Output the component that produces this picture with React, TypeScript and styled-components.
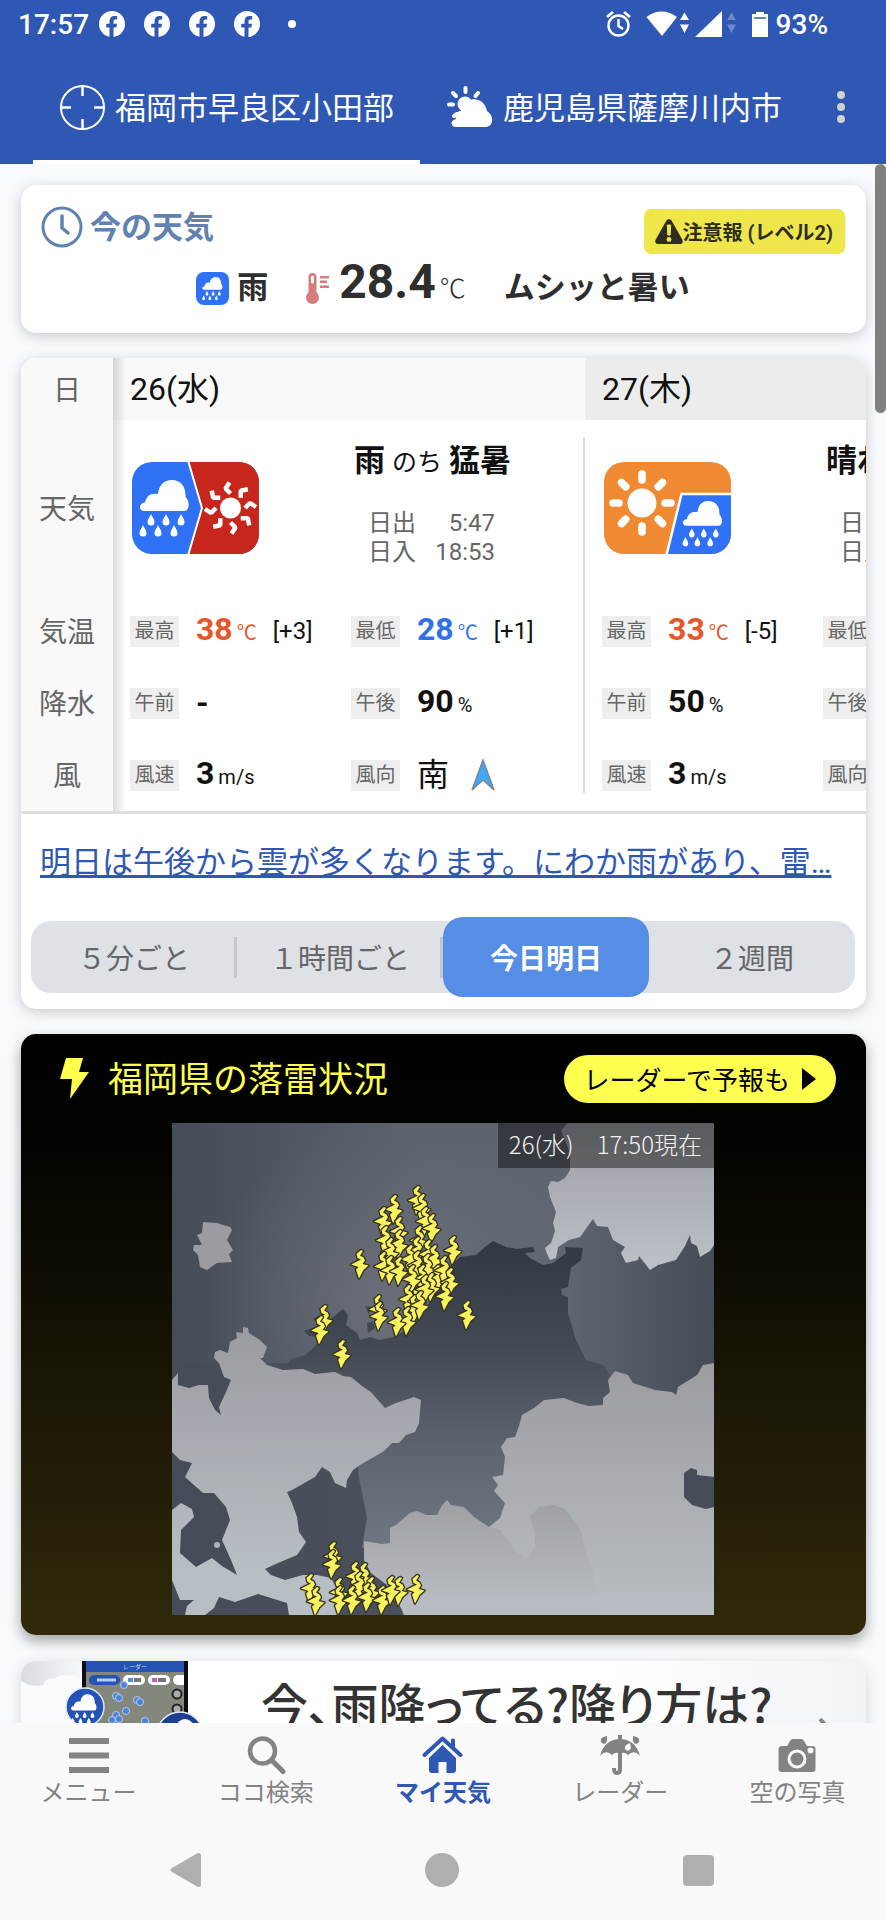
import React from "react";
import styled, { createGlobalStyle, css } from "styled-components";

const blue = "#2f57b4";
const yellow = "#ffff4f";

const GlobalStyle = createGlobalStyle`
  * { box-sizing: border-box; }
  html, body { margin: 0; padding: 0; }
  body {
    font-family: Roboto, "Noto Sans CJK JP", sans-serif;
    color: #111;
    background: #f8fafd;
  }
  button { font: inherit; color: inherit; background: none; border: 0; padding: 0; margin: 0; cursor: pointer; }
  a { color: inherit; text-decoration: none; }
  h2 { margin: 0; font: inherit; }
  svg { display: block; flex: none; }
`;

const Screen = styled.div`
  height: 100vh;
  display: flex;
  flex-direction: column;
  overflow: hidden;
`;

/* ---------- header ---------- */

const Header = styled.header`
  flex: none;
  background: ${blue};
  color: #fff;
`;

const StatusBar = styled.div`
  display: flex;
  align-items: center;
  justify-content: space-between;
  height: 50px;
  padding: 0 58px 2px 18px;
  font-size: 28px;
  font-weight: 500;
`;

const StatusLeft = styled.div`
  display: flex;
  align-items: center;
  gap: 10px;
`;

const Notifications = styled.div`
  display: flex;
  align-items: center;
  gap: 19px;
`;

const Dot = styled.span`
  width: 8px;
  height: 8px;
  margin-left: 9px;
  border-radius: 50%;
  background: #fff;
`;

const StatusRight = styled.div`
  display: flex;
  align-items: center;
  gap: 8px;
`;

const Tabs = styled.nav`
  display: grid;
  grid-template-columns: 1fr 1fr 79px;
  height: 114px;
  padding-left: 33px;
`;

const Tab = styled.button<{ $active?: boolean }>`
  display: flex;
  align-items: center;
  justify-content: flex-start;
  gap: 10px;
  padding: 4px 0 0 27px;
  border-bottom: 4px solid ${(p) => (p.$active ? "#fff" : "transparent")};
  font-size: 31px;
  white-space: nowrap;
  span { padding-bottom: 4px; }
`;

const MoreButton = styled.button`
  display: flex;
  flex-direction: column;
  align-items: center;
  justify-content: center;
  gap: 4px;
  padding-right: 11px;
  span {
    width: 8px;
    height: 8px;
    border-radius: 50%;
    background: #d0d0d0;
  }
`;

/* ---------- content ---------- */

const Main = styled.main`
  position: relative;
  flex: 1;
  min-height: 0;
  overflow: hidden;
  display: flex;
  flex-direction: column;
  gap: 25px;
  padding: 21px 20px 0 21px;
`;

const ScrollThumb = styled.div`
  position: absolute;
  top: 0;
  right: 0;
  width: 11px;
  height: 249px;
  border-radius: 6px;
  background: #808080;
`;

const Card = styled.section`
  flex: none;
  border-radius: 15px;
  background: #fff;
  box-shadow: 0 3px 14px rgba(0, 0, 0, 0.2);
  overflow: hidden;
`;

const NowCard = styled(Card)`
  height: 148px;
  padding: 21px 21px 0 20px;
`;

const NowHead = styled.div`
  display: flex;
  justify-content: space-between;
  align-items: flex-start;
  height: 48px;
`;

const NowTitle = styled.h2`
  display: flex;
  align-items: center;
  gap: 7px;
  color: #6182b0;
  font-size: 31px;
  line-height: 41px;
  font-weight: 700;
`;

const Alert = styled.button`
  display: flex;
  align-items: center;
  height: 45px;
  margin-top: 3px;
  padding: 0 12px 0 11px;
  border-radius: 7px;
  background: #eee64a;
  color: #2d2d22;
  font-size: 20px;
  font-weight: 700;
  white-space: nowrap;
`;

const NowRow = styled.div`
  display: flex;
  align-items: center;
  justify-content: center;
  gap: 38px;
  height: 56px;
  color: #2e2e2e;
  font-size: 31px;
  font-weight: 700;
`;

const NowItem = styled.div`
  display: flex;
  align-items: center;
  gap: 8px;
  svg { margin-top: 12px; }
`;

const NowText = styled.span`
  padding-top: 12px;
  line-height: 46px;
`;

const NowTemp = styled.span`
  margin-left: 2px;
  font-size: 48px;
  line-height: 56px;
  small {
    margin-left: 4px;
    font-size: 26px;
    line-height: 26px;
    font-weight: 300;
  }
`;

/* ---------- forecast ---------- */

const TableScroll = styled.div`
  overflow: hidden;
  border-bottom: 3px solid #dedede;
`;

const ForecastTable = styled.table`
  width: 1036px;
  table-layout: fixed;
  border-collapse: separate;
  border-spacing: 0;
  th, td { padding: 0; }
`;

const LabelCol = styled.col` width: 92px; `;
const FirstHalfCol = styled.col` width: 238px; `;
const SecondHalfCol = styled.col` width: 234px; `;

const Row = styled.tr<{ $height: number }>`
  height: ${(p) => p.$height}px;
`;

const RowLabel = styled.th`
  position: sticky;
  left: 0;
  background: #f9f9f9;
  color: #666;
  font-size: 28px;
  line-height: 36px;
  font-weight: 400;
  && { padding-top: 4px; }
  &::after {
    content: "";
    position: absolute;
    top: 0;
    bottom: 0;
    left: 100%;
    width: 13px;
    background: linear-gradient(90deg, rgba(0, 0, 0, 0.14), rgba(0, 0, 0, 0));
  }
`;

const DayHead = styled.th<{ $shade: boolean }>`
  background: ${(p) => (p.$shade ? "#ececec" : "#f9f9f9")};
  text-align: left;
  font-size: 32px;
  line-height: 40px;
  font-weight: 400;
  && { padding-left: 17px; }
`;

const Cell = styled.td<{ $divider?: "top" | "full" | "bottom" }>`
  ${(p) =>
    p.$divider &&
    css`
      background: linear-gradient(#dedede, #dedede) no-repeat right
        ${p.$divider === "top" ? "bottom" : "top"} / 2px
        ${p.$divider === "full" ? "100%" : p.$divider === "top" ? "calc(100% - 17px)" : "calc(100% - 18px)"};
    `}
`;

const IconBox = styled.div`
  padding-left: 19px;
`;

const Summary = styled.div`
  display: flex;
  flex-direction: column;
  gap: 24px;
  padding: 0 0 10px 3px;
`;

const SummaryText = styled.div`
  font-size: 31px;
  line-height: 44px;
  font-weight: 700;
  white-space: nowrap;
  small {
    margin: 0 7px;
    font-size: 25px;
    font-weight: 400;
  }
`;

const SunTimes = styled.div`
  display: grid;
  grid-template-columns: 48px 79px;
  margin-left: 14px;
  color: #666;
  font-size: 24px;
  line-height: 29px;
  span:nth-child(even) { text-align: right; }
`;

const Metric = styled.div<{ $second?: boolean }>`
  display: flex;
  align-items: center;
  padding-left: ${(p) => (p.$second ? 0 : 17)}px;
  white-space: nowrap;
`;

const Tag = styled.span`
  width: 49px;
  margin-right: 17px;
  background: #eee;
  color: #666;
  text-align: center;
  font-size: 20px;
  line-height: 31px;
`;

const Value = styled.span<{ $tone?: string; $plain?: boolean }>`
  color: ${(p) => p.$tone || "#111"};
  font-size: 32px;
  line-height: 40px;
  font-weight: ${(p) => (p.$plain ? 400 : 700)};
  small {
    margin-left: 4px;
    font-size: 20px;
    font-weight: 400;
  }
`;

const Diff = styled.span`
  margin-left: 16px;
  font-size: 24px;
`;

const WindArrow = styled.svg`
  margin-left: 22px;
`;

const Comment = styled.a`
  display: block;
  padding: 26px 19px 35px;
  color: ${blue};
  font-size: 31px;
  line-height: 46px;
  white-space: nowrap;
  text-decoration: underline 3px;
  text-underline-offset: 2px;
  text-decoration-skip-ink: none;
`;

const Segments = styled.div`
  display: grid;
  grid-template-columns: repeat(4, 1fr);
  height: 72px;
  margin: 0 11px 16px 10px;
  border-radius: 20px;
  background: #dee1e6;
`;

const Segment = styled.button<{ $active?: boolean; $line?: boolean }>`
  font-size: 28px;
  color: #666;
  background: ${(p) =>
    p.$line ? "linear-gradient(#c3c6ca, #c3c6ca) no-repeat right center / 3px 41px" : "none"};
  ${(p) =>
    p.$active &&
    css`
      margin: -4px 0;
      border-radius: 20px;
      background: #568de5;
      color: #fff;
      font-weight: 700;
    `}
`;

/* ---------- lightning ---------- */

const LightningCard = styled(Card)`
  background: linear-gradient(#000, #030300 18%, #302a0a);
  box-shadow: 0 6px 14px rgba(0, 0, 0, 0.35);
`;

const LightningHead = styled.div`
  display: flex;
  align-items: center;
  height: 89px;
  padding: 0 30px 0 39px;
`;

const LightningTitle = styled.h2`
  flex: 1;
  margin-left: 19px;
  padding-top: 4px;
  color: ${yellow};
  font-size: 35px;
  line-height: 50px;
`;

const RadarLink = styled.a`
  display: flex;
  align-items: center;
  gap: 12px;
  height: 48px;
  padding: 0 20px;
  border-radius: 24px;
  background: ${yellow};
  color: #000;
  font-size: 26px;
`;

const MapFigure = styled.figure`
  position: relative;
  margin: 0 152px 20px 151px;
  svg { width: 100%; height: auto; }
`;

const MapTime = styled.figcaption`
  position: absolute;
  top: 0;
  right: 0;
  display: flex;
  gap: 23px;
  padding: 0 12px 4px 11px;
  background: rgba(0, 0, 0, 0.42);
  color: #f2f2f2;
  font-family: "Noto Sans CJK JP", sans-serif;
  font-size: 24px;
  line-height: 41px;
  font-weight: 300;
`;

/* ---------- banner ---------- */

const Banner = styled.a`
  flex: none;
  display: flex;
  align-items: flex-start;
  margin-top: 1px;
  height: 170px;
  border-radius: 15px;
  overflow: hidden;
  background: linear-gradient(90deg, #fff 70%, #f1f3f7);
  box-shadow: 0 3px 14px rgba(0, 0, 0, 0.14);
  color: #333;
`;

const BannerText = styled.span`
  flex: 1;
  margin: 10px 0 0 37px;
  font-family: "Noto Sans CJK JP", sans-serif;
  font-size: 47px;
  line-height: 64px;
  font-weight: 500;
  font-feature-settings: "palt";
  white-space: nowrap;
`;

const BannerChevron = styled.svg`
  margin: 56px 34px 0 0;
`;

/* ---------- bottom ---------- */

const BottomNav = styled.nav`
  position: relative;
  flex: none;
  display: grid;
  grid-template-columns: repeat(5, 1fr);
  height: 97px;
  padding-top: 11px;
  background: #f9f9f9;
`;

const NavItem = styled.a<{ $active?: boolean }>`
  display: flex;
  flex-direction: column;
  align-items: center;
  gap: 1px;
  color: ${(p) => (p.$active ? blue : "#838383")};
  font-size: 24px;
  line-height: 32px;
  font-weight: ${(p) => (p.$active ? 700 : 400)};
  white-space: nowrap;
`;

const SystemNav = styled.div`
  flex: none;
  display: grid;
  grid-template-columns: repeat(3, 1fr);
  height: 100px;
  padding: 0 60px 0 58px;
  background: #f9f9f9;
`;

const SystemButton = styled.button`
  display: flex;
  align-items: center;
  justify-content: center;
`;

/* ---------- drawings ---------- */

const FacebookIcon = () => (
  <svg width="26" height="26" viewBox="0 0 26 26" aria-hidden="true">
    <circle cx="13" cy="13" r="13" fill="#fff" />
    <path d="M10.500 26V16.500H7.200V12.700H10.500V10.200C10.500 6.800 12.500 5 15.500 5C16.800 5 18.200 5.200 18.200 5.200V8.500H16.600C15 8.500 14.500 9.400 14.500 10.400V12.700H18L17.400 16.500H14.500V26Z" fill={blue} />
  </svg>
);

const StatusIcons = () => (
  <svg width="162" height="28" viewBox="0 0 162 28" aria-hidden="true">
    <g fill="none" stroke="#fff" strokeWidth="2.400">
      <circle cx="12.500" cy="15.500" r="10" />
      <path d="M12.500 9V16L17 19" />
      <path d="M1 7L7 2M24 7L18 2" strokeWidth="2.800" />
    </g>
    <path d="M40.500 7C49 -0.500 62 -0.500 71 7L56 26Z" fill="#fff" />
    <path d="M78.500 2.500L83 10H74ZM78.500 23L83 14.500H74Z" fill="#fff" />
    <path d="M116 1V27H89Z" fill="#fff" />
    <path d="M125.500 2.500L130 10H121ZM125.500 23L130 14.500H121Z" fill="#fff" opacity="0.300" />
    <path d="M146 4H150V2H158V4H162V27H146Z" fill="#fff" />
    <path d="M148 8H160" stroke={blue} strokeWidth="1.500" />
  </svg>
);

const TargetIcon = () => (
  <svg width="45" height="45" viewBox="0 0 45 45" fill="none" stroke="#fff" strokeWidth="2" aria-hidden="true">
    <circle cx="22.500" cy="22.500" r="21.500" />
    <path d="M22.500 1V11M22.500 34V44M1 22.500H11M34 22.500H44" strokeWidth="2.500" />
  </svg>
);

const SunCloudIcon = () => (
  <svg width="46" height="42" viewBox="0 0 46 42" fill="#fff" aria-hidden="true">
    <g stroke="#fff" strokeWidth="4" strokeLinecap="round">
      <path d="M18.500 2V6M6 7L9 10M31 7L28.500 10M2 18.500H6M7 30L9.500 28" />
    </g>
    <circle cx="18" cy="18" r="7.500" />
    <path d="M9 41C3 41 3 34 9 33C7 29 10 25 14 25C12 18 18 14 22 15C26 11 38 13 40 25C48 30 46 41 39 41Z" />
  </svg>
);

const ClockIcon = () => (
  <svg width="42" height="42" viewBox="0 0 42 42" fill="none" stroke="#6182b0" strokeLinecap="round" strokeLinejoin="round" aria-hidden="true">
    <circle cx="21" cy="21" r="19" strokeWidth="3" />
    <path d="M21 10V22L27 27" strokeWidth="3.500" />
  </svg>
);

const WarningIcon = () => (
  <svg width="28" height="25" viewBox="0 0 28 25" aria-hidden="true">
    <path d="M11.500 1.500Q14 -1.500 16.500 1.500L27.500 21Q28.500 25 24.500 25H3.500Q-0.500 25 0.500 21Z" fill="#2d2d22" />
    <path d="M12.300 6H15.700L15.200 16H12.800Z" fill="#eee64a" stroke="#eee64a" strokeLinejoin="round" />
    <circle cx="14" cy="20.500" r="2.400" fill="#eee64a" />
  </svg>
);

const dropPath = "M0 -6C1 -3 3.500 -1 3.500 2A3.500 3.500 0 0 1 -3.500 2C-3.500 -1 -1 -3 0 -6Z";

const RainCloud = () => (
  <g fill="#fff">
    <path d="M12 49C6.500 49 6.500 41 13 40.500C14 34 19 30.500 26 32C27 23 32 18 40 18C49 18 54 25 53.500 35C58 39 58 49 52 49Z" />
    {[[19, 58], [34, 58], [49, 58], [11, 69], [26, 69], [42, 69]].map(([x, y]) => (
      <path key={`${x}-${y}`} d={dropPath} transform={`translate(${x} ${y})`} />
    ))}
  </g>
);

const RainBadge = () => (
  <svg width="33" height="33" viewBox="0 0 33 33" aria-hidden="true">
    <rect width="33" height="33" rx="8" fill="#3072f6" />
    <g transform="translate(3.200 -2.400) scale(.41)"><RainCloud /></g>
  </svg>
);

const ThermometerIcon = () => (
  <svg width="23" height="31" viewBox="0 0 23 31" fill="#d77c7c" aria-hidden="true">
    <circle cx="6.500" cy="24.500" r="6.500" />
    <rect x="2.500" y="0" width="8" height="24" rx="4" />
    <rect x="5" y="2.500" width="3" height="8" rx="1.500" fill="#fff" />
    <path d="M14 3H23V5.500H14ZM14 7.500H21V10H14ZM14 12.500H23V15H14Z" />
  </svg>
);

const RainThenHot = () => (
  <svg width="127" height="92" viewBox="0 0 127 92" role="img" aria-label="雨のち猛暑">
    <clipPath id="tileA"><rect width="127" height="92" rx="20" /></clipPath>
    <g clipPath="url(#tileA)">
      <rect width="127" height="92" fill="#3072f6" />
      <path d="M56.500 -2V0L70 46L56.500 92V94H130V-2Z" fill="#c6261c" stroke="#fff" strokeWidth="2" />
      <RainCloud />
      <circle cx="98.500" cy="46" r="10.500" fill="#fff" />
      <g fill="none" stroke="#fff" strokeWidth="4.500" strokeLinejoin="bevel">
        {[0, 45, 90, 135, 180, 225, 270, 315].map((a) => (
          <path key={a} d="M97.500 20.500L93.500 26.500L98.500 31.500" transform={`rotate(${a} 98.500 46)`} />
        ))}
      </g>
    </g>
  </svg>
);

const SunPartRain = () => (
  <svg width="127" height="92" viewBox="0 0 127 92" role="img" aria-label="晴れ一時雨">
    <clipPath id="tileB"><rect width="127" height="92" rx="20" /></clipPath>
    <g clipPath="url(#tileB)">
      <rect width="127" height="92" fill="#ef8a33" />
      <circle cx="38" cy="41" r="14.500" fill="#fff" />
      <g stroke="#fff" strokeWidth="7.500" strokeLinecap="round">
        {[0, 45, 90, 135, 180, 225, 270, 315].map((a) => (
          <path key={a} d="M38 12V18" transform={`rotate(${a} 38 41)`} />
        ))}
      </g>
      <path d="M77.500 32H130V95H62Z" fill="#3072f6" stroke="#fff" strokeWidth="2.500" />
      <g transform="translate(72.600 24.600) scale(.8)"><RainCloud /></g>
    </g>
  </svg>
);

const BoltIcon = () => (
  <svg width="29" height="41" viewBox="0 0 29 41" fill={yellow} aria-hidden="true">
    <path d="M6 0H23L19 14H29L10 41L12 21H0Z" />
  </svg>
);

const strikes = [
  [245, 63], [250, 71], [222, 72], [211, 84], [253, 84], [260, 91], [227, 94], [247, 103], [213, 103],
  [227, 107], [245, 114], [256, 117], [218, 115], [238, 122], [262, 122], [211, 129], [218, 133], [227, 134],
  [245, 128], [255, 131], [281, 113], [250, 142], [240, 142], [265, 142], [272, 133], [259, 150], [278, 145],
  [236, 162], [245, 164], [253, 152], [242, 172], [248, 168], [273, 159], [235, 184], [225, 185], [206, 172],
  [207, 179], [295, 178], [152, 182], [148, 193], [170, 217], [188, 127],
  [161, 419], [160, 427], [138, 451], [144, 464], [167, 455], [167, 463], [192, 440], [183, 439], [187, 449],
  [199, 454], [180, 463], [195, 460], [210, 463], [227, 454], [219, 453], [244, 452],
];

const LightningMap = () => (
  <svg viewBox="0 0 542 492" role="img" aria-label="福岡県周辺の落雷地図">
    <defs>
      <linearGradient id="sea" x1="0" y1="0" x2="1" y2="0">
        <stop offset="0" stopColor="#454b57" />
        <stop offset=".45" stopColor="#5c636d" />
        <stop offset=".72" stopColor="#5f666f" />
        <stop offset="1" stopColor="#454c58" />
      </linearGradient>
      <radialGradient id="seaGlow" gradientUnits="userSpaceOnUse" cx="225" cy="180" r="190">
        <stop offset="0" stopColor="#6e727c" stopOpacity=".8" />
        <stop offset="1" stopColor="#6e727c" stopOpacity="0" />
      </radialGradient>
      <linearGradient id="home" gradientUnits="userSpaceOnUse" x1="0" y1="120" x2="0" y2="410">
        <stop offset="0" stopColor="#333943" />
        <stop offset=".35" stopColor="#424952" />
        <stop offset=".65" stopColor="#59606a" />
        <stop offset="1" stopColor="#6d7680" />
      </linearGradient>
      <linearGradient id="west" gradientUnits="userSpaceOnUse" x1="0" y1="205" x2="0" y2="450">
        <stop offset="0" stopColor="#9a9ba1" />
        <stop offset="1" stopColor="#b8bfc4" />
      </linearGradient>
      <linearGradient id="east" gradientUnits="userSpaceOnUse" x1="0" y1="250" x2="0" y2="490">
        <stop offset="0" stopColor="#9d9da2" />
        <stop offset="1" stopColor="#b8bec3" />
      </linearGradient>
      <linearGradient id="south" gradientUnits="userSpaceOnUse" x1="0" y1="378" x2="0" y2="480">
        <stop offset="0" stopColor="#a09fa3" />
        <stop offset="1" stopColor="#b7bdc2" />
      </linearGradient>
      <linearGradient id="north" gradientUnits="userSpaceOnUse" x1="0" y1="0" x2="0" y2="145">
        <stop offset="0" stopColor="#9c9ea3" />
        <stop offset="1" stopColor="#bcc1c8" />
      </linearGradient>
      <g id="strike">
        <path d="M1 0L-3.500 4L-2.500 8L1 9.500L-9 14.500L-3 16.500L-1.500 17.500L-4 19.500L-1 28.500L3.500 20L8.500 15.500L2.500 14L5 10.500L3.500 7.500L0 5.500L3 1Z" fill="#fbf35d" stroke="#35331f" strokeWidth="2.600" strokeLinejoin="round" paintOrder="stroke" />
      </g>
    </defs>
    <rect width="542" height="492" fill="url(#sea)" />
    <rect width="542" height="492" fill="url(#seaGlow)" />
    <path d="M0 240H230V492H0Z" fill="#464c57" opacity=".75" />
    <path d="M31 99L45 100L58 104L60 107L55 117L61 127L57 131L60 139L45 140L35 147L28 144L26 132L21 127L22 122L30 122L25 112L30 110Z" fill="#9b9ba1" />
    <path d="M113 244L119 236L133 232L141 225L150 215L137 213L132 208L140 205L150 203L161 194L171 186L176 192L174 202L185 210L188 217L198 214L208 217L221 214L233 208L248 194L261 174L271 150L288 134L304 132L313 124L321 118L334 124L345 126L361 124L363 129L353 130L358 135L371 142L381 140L394 130L393 124L411 125L409 137L399 145L396 164L389 166L390 172L396 174L396 190L404 217L414 237L431 242L438 252L436 300L340 412L190 425L195 395L186 350L188 280Z" fill="url(#home)" />
    <path d="M195 200L201 198L203 205L196 210ZM193 183L199 184L197 192Z" fill="#424952" />
    <path d="M0 257L6 250L6 262L17 265L27 262L36 262L37 275L43 287L49 292L47 284L54 269L59 257L52 254L47 240L42 235L43 229L48 227L56 230L58 219L65 215L64 209L71 210L71 204L76 205L77 210L88 217L95 224L91 235L88 235L95 242L111 247L131 246L143 251L152 250L163 249L171 253L179 254L190 263L199 269L205 276L213 285L224 280L242 274L249 277L247 300L243 309L234 312L227 320L220 320L212 328L202 334L188 342L181 347L175 357L174 365L163 360L158 349L150 344L143 354L120 367L115 369L120 380L125 394L127 409L134 419L125 432L106 440L93 446L99 452L113 457L131 452L145 452L159 455L167 470L167 492H117L115 480L86 471L63 479L47 474L42 485L33 492H13L15 483L22 477L8 477L0 457V387L9 380L20 386L22 394L9 407L8 430L24 444L40 435L50 443L65 452L59 437L50 417L58 397L54 384L42 370L31 370L13 354L20 340L8 337L0 329Z" fill="url(#west)" />
    <circle cx="45" cy="422" r="3" fill="#aeb3ba" />
    <path d="M542 240L531 242L525 252L506 264L504 272L500 269L483 267L461 260L456 252L443 248L436 257L438 269L431 275V282L417 283L405 280L392 275L372 277L362 285L350 292L347 303L343 314L335 315L329 324L333 334L331 352L320 354L326 362L322 368L333 380L328 395L317 404L345 460L400 492H542Z" fill="url(#east)" />
    <path d="M542 354L525 352V347L519 345L512 350V374L520 382L534 386L542 384Z" fill="#464c58" />
    <path d="M192 418L210 421L218 420V405L224 402L238 390L245 388L254 392L265 392L270 382L275 377L279 382L292 384L302 394L317 404L328 407L345 430L354 435L363 424L363 410L358 394L367 384L381 382L392 385L399 394L409 407L413 427L420 444L424 470L422 492H232L229 485L215 462L199 450L192 437Z" fill="url(#south)" />
    <path d="M396 0L389 7L398 30L398 47L393 55L386 59L379 58L376 64L378 74L384 89L381 100L383 108L379 120L373 125L375 131L378 137L384 135L386 124L397 117L408 114L421 96L425 103L436 104L441 117L453 124L449 130L454 140L466 137L467 133L478 147L486 142L504 137L513 123L518 112L519 120L525 123L528 134L538 128L542 122V0Z" fill="url(#north)" />
    {strikes.map(([x, y], i) => (
      <use key={i} href="#strike" x={x} y={y} />
    ))}
  </svg>
);

const BannerArt = () => (
  <svg width="203" height="170" viewBox="0 0 203 170" aria-hidden="true">
    <linearGradient id="bannerSky" x1="0" x2="1"><stop offset="0" stopColor="#d9dbe2" /><stop offset="1" stopColor="#f7f8fa" /></linearGradient>
    <rect width="61" height="60" fill="url(#bannerSky)" />
    <path d="M0 20Q12 27 22 24Q25 16 34 18Q40 12 48 15Q56 12 62 20V170H0Z" fill="#fbfbfd" />
    <rect x="61" y="0" width="106" height="170" fill="#0c0d12" />
    <rect x="65" y="0" width="98" height="11" fill="#2553b5" />
    <rect x="65" y="11" width="98" height="160" fill="#84887c" />
    <text x="114" y="8" fill="#cfdcf5" fontSize="6" textAnchor="middle">レーダー</text>
    <rect x="68" y="14" width="31" height="10" rx="5" fill="#2553b5" />
    <rect x="102" y="14" width="22" height="10" rx="5" fill="#fff" />
    <rect x="127" y="14" width="22" height="10" rx="5" fill="#fff" />
    <path d="M163 14H157A5 5 0 0 0 157 24H163Z" fill="#fff" />
    <path d="M76 19H95" stroke="#b9cdf2" strokeWidth="3" />
    <path d="M107 19H112" stroke="#4f8fe0" strokeWidth="4" /><path d="M113 19H120" stroke="#777" strokeWidth="4" />
    <path d="M131 19H136" stroke="#c55db3" strokeWidth="4" /><path d="M137 19H145" stroke="#777" strokeWidth="4" />
    {[[95, 35], [98, 37], [116, 39], [119, 41], [95, 54], [105, 50], [98, 58], [91, 59], [124, 60], [103, 24]].map(([x, y]) => (
      <circle key={`${x}-${y}`} cx={x} cy={y} r="3.500" fill="#4b83d6" stroke="#b9cdec" strokeWidth="1" />
    ))}
    <circle cx="156" cy="33" r="4.500" fill="#aaa" stroke="#222" strokeWidth="2" />
    <circle cx="156" cy="48" r="4.500" fill="#aaa" stroke="#222" strokeWidth="2" />
    <circle cx="64" cy="46" r="19" fill="#2553b5" stroke="#dfe8f8" strokeWidth="1.500" />
    <g transform="translate(46 24) scale(.52)"><RainCloud /></g>
    <circle cx="159" cy="74" r="23" fill="#1c3f94" stroke="#dfe8f8" strokeWidth="1.500" />
    <circle cx="164" cy="67" r="9" fill="#fff" />
  </svg>
);

const MenuIcon = () => (
  <svg width="40" height="42" viewBox="0 0 40 42" aria-hidden="true">
    <path d="M0 4H40V10H0ZM0 18.500H40V24.500H0ZM0 33H40V39H0Z" fill="#838383" />
  </svg>
);

const SearchIcon = () => (
  <svg width="40" height="42" viewBox="0 0 40 42" fill="none" stroke="#838383" strokeWidth="4.500" aria-hidden="true">
    <circle cx="16.500" cy="17" r="12.500" />
    <path d="M25.500 26L37 37.500" strokeLinecap="round" strokeWidth="5" />
  </svg>
);

const HomeIcon = () => (
  <svg width="42" height="42" viewBox="0 0 42 42" aria-hidden="true">
    <path d="M2.500 21L20.500 4.500L38.500 21" fill="none" stroke={blue} strokeWidth="4" strokeLinecap="round" strokeLinejoin="round" />
    <path d="M29 5.500Q31 3.500 33 5.500V15L29 11ZM7 24L20.500 11L34 24V36Q34 39 31 39H24.500V28H16.500V39H10Q7 39 7 36Z" fill={blue} />
  </svg>
);

const UmbrellaIcon = () => (
  <svg width="42" height="42" viewBox="0 0 42 42" fill="#838383" aria-hidden="true">
    <path d="M1 22C4 10 12 5 21 5C30 5 38 10 41 22Q35 15 29 21Q25 17 21 20Q17 17 13 21Q7 15 1 22Z" />
    <path d="M21 1V5M21 18V36Q21 39 17.500 39Q15 39 15 34" fill="none" stroke="#838383" strokeWidth="4" />
    <path d="M8 2Q9 9 5 10Q1 9 2 5Q3 3 8 2ZM34 2Q33 9 37 10Q41 9 40 5Q39 3 34 2Z" />
    <path d="M31 9Q25 11 26 15Q29 19 32 14Z" fill="#f9f9f9" />
  </svg>
);

const CameraIcon = () => (
  <svg width="38" height="42" viewBox="0 0 38 42" aria-hidden="true">
    <path d="M4 12H9L12 7Q13 5 15 5H23Q25 5 26 7L29 12H34Q37.500 12 37.500 15V35Q37.500 38 34 38H4Q0.500 38 0.500 35V15Q0.500 12 4 12Z" fill="#838383" />
    <circle cx="19" cy="25" r="8" fill="#838383" stroke="#f9f9f9" strokeWidth="3" />
    <circle cx="32.500" cy="16.500" r="3" fill="#f9f9f9" />
  </svg>
);

/* ---------- data ---------- */

type Day = {
  label: string;
  icon: React.ReactNode;
  from: string;
  joint: string;
  to: string;
  rise: string;
  set: string;
  high: string;
  highDiff: string;
  low: string;
  lowDiff: string;
  am: string;
  pm: string;
  wind: string;
  direction: string;
};

const days: Day[] = [
  { label: "26(水)", icon: <RainThenHot />, from: "雨", joint: "のち", to: "猛暑", rise: "5:47", set: "18:53", high: "38", highDiff: "[+3]", low: "28", lowDiff: "[+1]", am: "", pm: "90", wind: "3", direction: "南" },
  { label: "27(木)", icon: <SunPartRain />, from: "晴れ", joint: "一時", to: "雨", rise: "5:47", set: "18:52", high: "33", highDiff: "[-5]", low: "28", lowDiff: "[0]", am: "50", pm: "50", wind: "3", direction: "南" },
];

const navItems = [
  { label: "メニュー", icon: <MenuIcon /> },
  { label: "ココ検索", icon: <SearchIcon /> },
  { label: "マイ天気", icon: <HomeIcon />, active: true },
  { label: "レーダー", icon: <UmbrellaIcon /> },
  { label: "空の写真", icon: <CameraIcon /> },
];

const Rain = ({ amount }: { amount: string }) => (
  <Value>{amount ? <>{amount}<small>%</small></> : "-"}</Value>
);

const Forecast = () => (
  <TableScroll>
    <ForecastTable>
      <colgroup>
        <LabelCol />
        {days.map((d) => (
          <React.Fragment key={d.label}><FirstHalfCol /><SecondHalfCol /></React.Fragment>
        ))}
      </colgroup>
      <tbody>
        <Row $height={62}>
          <RowLabel scope="row">日</RowLabel>
          {days.map((d, i) => (
            <DayHead key={d.label} scope="col" colSpan={2} $shade={i === 1}>{d.label}</DayHead>
          ))}
        </Row>
        <Row $height={175}>
          <RowLabel scope="row">天気</RowLabel>
          {days.map((d) => (
            <React.Fragment key={d.label}>
              <Cell><IconBox>{d.icon}</IconBox></Cell>
              <Cell $divider="top">
                <Summary>
                  <SummaryText>{d.from}<small>{d.joint}</small>{d.to}</SummaryText>
                  <SunTimes>
                    <span>日出</span><span>{d.rise}</span>
                    <span>日入</span><span>{d.set}</span>
                  </SunTimes>
                </Summary>
              </Cell>
            </React.Fragment>
          ))}
        </Row>
        <Row $height={72}>
          <RowLabel scope="row">気温</RowLabel>
          {days.map((d) => (
            <React.Fragment key={d.label}>
              <Cell><Metric><Tag>最高</Tag><Value $tone="#e4572a">{d.high}<small>℃</small></Value><Diff>{d.highDiff}</Diff></Metric></Cell>
              <Cell $divider="full"><Metric $second><Tag>最低</Tag><Value $tone="#3270e8">{d.low}<small>℃</small></Value><Diff>{d.lowDiff}</Diff></Metric></Cell>
            </React.Fragment>
          ))}
        </Row>
        <Row $height={72}>
          <RowLabel scope="row">降水</RowLabel>
          {days.map((d) => (
            <React.Fragment key={d.label}>
              <Cell><Metric><Tag>午前</Tag><Rain amount={d.am} /></Metric></Cell>
              <Cell $divider="full"><Metric $second><Tag>午後</Tag><Rain amount={d.pm} /></Metric></Cell>
            </React.Fragment>
          ))}
        </Row>
        <Row $height={72}>
          <RowLabel scope="row">風</RowLabel>
          {days.map((d) => (
            <React.Fragment key={d.label}>
              <Cell><Metric><Tag>風速</Tag><Value>{d.wind}<small>m/s</small></Value></Metric></Cell>
              <Cell $divider="bottom">
                <Metric $second>
                  <Tag>風向</Tag><Value $plain>{d.direction}</Value>
                  <WindArrow width="24" height="32" viewBox="0 0 24 32" aria-hidden="true">
                    <path d="M12 1L23 31L12 21L1 31Z" fill="#41a8f5" stroke="#7d868c" strokeWidth="1.500" />
                  </WindArrow>
                </Metric>
              </Cell>
            </React.Fragment>
          ))}
        </Row>
      </tbody>
    </ForecastTable>
  </TableScroll>
);

export default function App() {
  return (
    <Screen>
      <GlobalStyle />
      <Header>
        <StatusBar>
          <StatusLeft>
            <span>17:57</span>
            <Notifications>
              <FacebookIcon /><FacebookIcon /><FacebookIcon /><FacebookIcon />
              <Dot />
            </Notifications>
          </StatusLeft>
          <StatusRight>
            <StatusIcons />
            <span>93%</span>
          </StatusRight>
        </StatusBar>
        <Tabs>
          <Tab $active><TargetIcon /><span>福岡市早良区小田部</span></Tab>
          <Tab><SunCloudIcon /><span>鹿児島県薩摩川内市</span></Tab>
          <MoreButton aria-label="その他"><span /><span /><span /></MoreButton>
        </Tabs>
      </Header>

      <Main>
        <NowCard>
          <NowHead>
            <NowTitle><ClockIcon />今の天気</NowTitle>
            <Alert><WarningIcon />注意報 (レベル2)</Alert>
          </NowHead>
          <NowRow>
            <NowItem><RainBadge /><NowText>雨</NowText></NowItem>
            <NowItem><ThermometerIcon /><NowTemp>28.4<small>℃</small></NowTemp></NowItem>
            <NowText>ムシッと暑い</NowText>
          </NowRow>
        </NowCard>

        <Card>
          <Forecast />
          <Comment href="#">明日は午後から雲が多くなります。にわか雨があり、雷…</Comment>
          <Segments>
            <Segment $line>５分ごと</Segment>
            <Segment $line>１時間ごと</Segment>
            <Segment $active>今日明日</Segment>
            <Segment>２週間</Segment>
          </Segments>
        </Card>

        <LightningCard>
          <LightningHead>
            <BoltIcon />
            <LightningTitle>福岡県の落雷状況</LightningTitle>
            <RadarLink href="#">
              レーダーで予報も
              <svg width="14" height="22" viewBox="0 0 14 22" aria-hidden="true"><path d="M0 0L14 11L0 22Z" /></svg>
            </RadarLink>
          </LightningHead>
          <MapFigure>
            <LightningMap />
            <MapTime><span>26(水)</span><span>17:50現在</span></MapTime>
          </MapFigure>
        </LightningCard>

        <Banner href="#">
          <BannerArt />
          <BannerText>今、雨降ってる?降り方は?</BannerText>
          <BannerChevron width="14" height="26" viewBox="0 0 14 26" fill="none" stroke="#888" strokeWidth="4" aria-hidden="true">
            <path d="M2 2L12 13L2 24" />
          </BannerChevron>
        </Banner>
        <ScrollThumb />
      </Main>

      <BottomNav>
        {navItems.map((n) => (
          <NavItem key={n.label} href="#" $active={n.active}>{n.icon}{n.label}</NavItem>
        ))}
      </BottomNav>
      <SystemNav>
        <SystemButton aria-label="戻る">
          <svg width="32" height="36" viewBox="0 0 32 36" fill="#afafaf"><path d="M2 16L27 1.500Q31 0 31 4V32Q31 36 27 34.500L2 20Q-1 18 2 16Z" /></svg>
        </SystemButton>
        <SystemButton aria-label="ホーム">
          <svg width="34" height="34" viewBox="0 0 34 34" fill="#afafaf"><circle cx="17" cy="17" r="17" /></svg>
        </SystemButton>
        <SystemButton aria-label="履歴">
          <svg width="31" height="31" viewBox="0 0 31 31" fill="#afafaf"><rect width="31" height="31" rx="4" /></svg>
        </SystemButton>
      </SystemNav>
    </Screen>
  );
}
